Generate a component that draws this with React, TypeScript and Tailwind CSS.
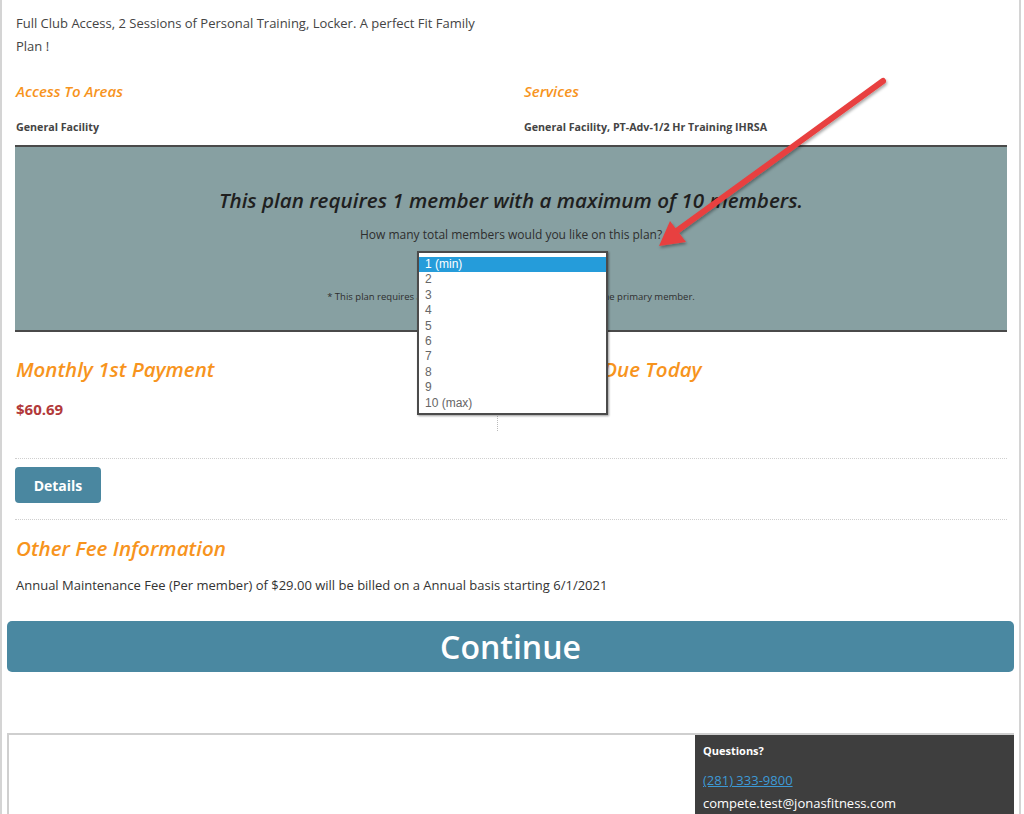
import React from "react";

const orange = "text-[#f7941d]";

export default function App() {
  const opts = ["1 (min)", "2", "3", "4", "5", "6", "7", "8", "9", "10 (max)"];
  return (
    <div className="relative w-[1024px] h-[814px] overflow-hidden bg-white" style={{ fontFamily: '"Open Sans", sans-serif' }}>
      <div className="w-[1021px] h-[814px] border-l-2 border-r-2 border-[#d4d4d4] flex flex-col">
        {/* content */}
        <div className="pl-[13px] pr-[12px]">
          <p className="pt-[12px] pl-[1px] w-[470px] text-[13px] leading-[23px] text-[#444]">
            Full Club Access, 2 Sessions of Personal Training, Locker. A perfect Fit Family Plan !
          </p>
          <div className="grid grid-cols-[509px_1fr] mt-[23px]">
            <div className="pl-[1px]">
              <div className={`italic font-semibold text-[15px] leading-[20px] ${orange}`}>Access To Areas</div>
              <div className="mt-[19px] text-[10.7px] font-bold text-[#444] leading-[14px]">General Facility</div>
            </div>
            <div>
              <div className={`italic font-semibold text-[15px] leading-[20px] ${orange}`}>Services</div>
              <div className="mt-[19px] text-[10.7px] font-bold text-[#444] leading-[14px]">General Facility, PT-Adv-1/2 Hr Training IHRSA</div>
            </div>
          </div>
          {/* gray panel */}
          <div className="mt-[11px] h-[187px] bg-[#87a0a2] border-t-2 border-b-2 border-[#4a4a4a] flex flex-col items-center">
            <div className="mt-[39px] italic font-semibold text-[20.6px] leading-[28px] text-[#1f1f1f]">
              This plan requires 1 member with a maximum of 10 members.
            </div>
            <div className="mt-[12px] text-[12px] leading-[18px] text-[#2e2e2e]">How many total members would you like on this plan?</div>
            <div className="mt-[47px] text-[9.5px] leading-[12px] text-[#2e2e2e]">
              * This plan requires all additional members to be added after the primary member.
            </div>
          </div>
          {/* payment */}
          <div className="grid grid-cols-[483px_1fr] mt-[23px]">
            <div className="pl-[1px] pb-[12px] border-r border-dotted border-[#bbb]">
              <div className={`italic font-semibold text-[20.5px] leading-[28px] ${orange}`}>Monthly 1st Payment</div>
              <div className="mt-[16px] text-[15px] font-bold text-[#b2393a] leading-[20px]">$60.69</div>
            </div>
            <div className="pl-[26px]">
              <div className={`italic font-semibold text-[20.5px] leading-[28px] ${orange}`}>Amount Due Today</div>
            </div>
          </div>
          <div className="mt-[27px] border-t border-dotted border-[#cfcfcf]"></div>
          <div className="mt-[8px] flex">
            <div className="w-[86px] h-[36px] rounded-[4px] bg-[#4a87a0] text-white font-bold text-[14px] flex items-center justify-center">
              Details
            </div>
          </div>
          <div className="mt-[16px] border-t border-dotted border-[#cfcfcf]"></div>
          <div className={`mt-[14px] pl-[1px] italic font-semibold text-[20.6px] leading-[28px] ${orange}`}>Other Fee Information</div>
          <div className="mt-[13px] pl-[1px] text-[13px] leading-[20px] text-[#333]">
            Annual Maintenance Fee (Per member) of $29.00 will be billed on a Annual basis starting 6/1/2021
          </div>
        </div>
        <div className="px-[5px]">
          <div className="mt-[26px] h-[51px] rounded-[5px] bg-[#4a88a1] flex items-center justify-center text-white font-semibold text-[32px]">
            Continue
          </div>
          <div className="mt-[61px] h-[90px] border-t-2 border-l-2 border-[#cfcfcf] flex">
            <div className="flex-1"></div>
            <div className="w-[319px] bg-[#3e3e3e] pl-[8px] pt-[8px]">
              <div className="text-white font-bold text-[11px] leading-[16px]">Questions?</div>
              <div className="mt-[12px] text-[13px] leading-[18px] text-[#3d9ad6] underline">(281) 333-9800</div>
              <div className="mt-[5px] text-[13px] leading-[18px] text-white">compete.test@jonasfitness.com</div>
            </div>
          </div>
        </div>
      </div>

      {/* open dropdown list */}
      <div
        className="absolute left-[417px] top-[251px] w-[191px] h-[164px] bg-white border-2 border-[#4b4b4b] shadow-[1px_1px_2px_rgba(0,0,0,0.4)] pt-[4px]"
        style={{ fontFamily: '"Liberation Sans", Arial, sans-serif' }}
      >
        {opts.map((o, i) => (
          <div
            key={o}
            className={
              i === 0
                ? "h-[15.4px] leading-[15px] pl-[6px] text-[12px] bg-[#259cda] text-white"
                : "h-[15.4px] leading-[15px] pl-[6px] text-[12px] text-[#666]"
            }
          >
            {o}
          </div>
        ))}
      </div>

      {/* annotation arrow */}
      <svg className="absolute left-0 top-0 pointer-events-none" width="1024" height="814">
        <defs>
          <filter id="sh" x="-20%" y="-20%" width="140%" height="140%">
            <feDropShadow dx="1" dy="2" stdDeviation="1.5" floodColor="#000" floodOpacity="0.35" />
          </filter>
        </defs>
        <g filter="url(#sh)">
          <line x1="883" y1="81" x2="674" y2="233" stroke="#e8403f" strokeWidth="6" strokeLinecap="round" />
          <polygon points="659,246 670,221 686,242" fill="#e8403f" />
        </g>
      </svg>
    </div>
  );
}
